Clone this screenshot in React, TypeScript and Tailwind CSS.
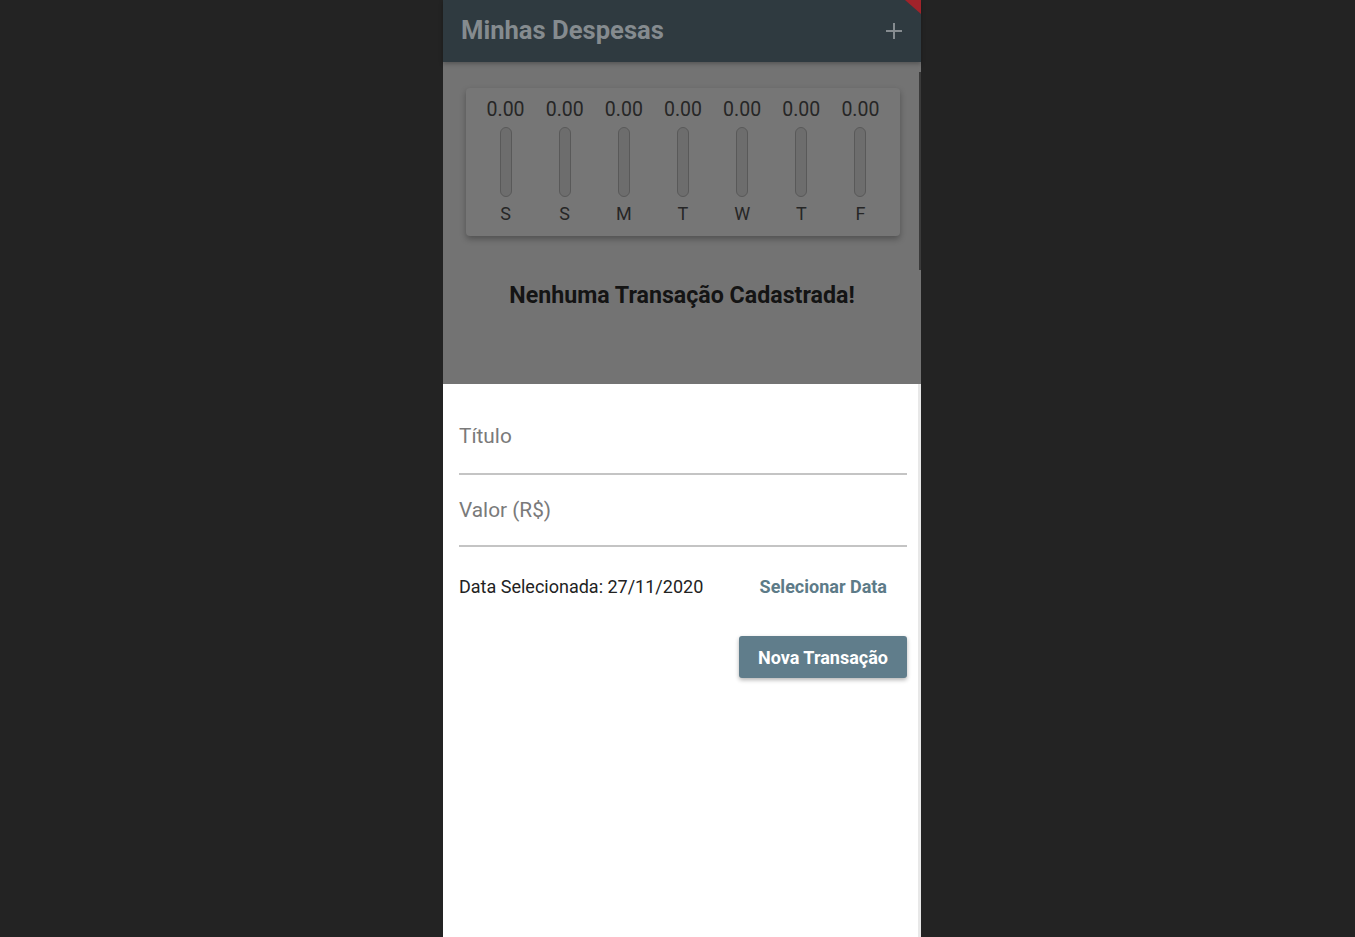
import React from "react";

const days = ["S", "S", "M", "T", "W", "T", "F"];

export default function App() {
  return (
    <div
      className="w-full h-[937px] bg-[#232323] flex justify-start pl-[443px] overflow-hidden"
      style={{ fontFamily: "Roboto, 'Liberation Sans', sans-serif" }}
    >
      <div className="w-[478px] h-full flex flex-col relative">
        {/* Header */}
        <div className="h-[62px] bg-[#2f3a40] flex items-center justify-between pl-[18px] pr-[16px] shadow-[0_2px_4px_rgba(0,0,0,0.25)] z-10">
          <span className="text-[25.6px] font-bold text-[#858b8f] mt-[-2px]">
            Minhas Despesas
          </span>
          <svg width="20" height="20" viewBox="0 0 20 20" className="mr-[1px]">
            <path d="M10 2v16M2 10h16" stroke="#868c90" strokeWidth="2" />
          </svg>
        </div>
        <svg width="20" height="14" viewBox="0 0 20 14" className="absolute right-0 top-0 z-20">
          <polygon points="4,0 20,0 20,14" fill="#a0232a" />
        </svg>

        {/* Dimmed content */}
        <div className="h-[322px] bg-[#737373] flex flex-col relative">
          <div className="absolute right-0 top-[10px] w-[2px] h-[198px] bg-[#3a3a3a]" />
          <div className="mt-[26px] ml-[23px] mr-[21px] h-[148px] bg-[#767676] rounded-[4px] shadow-[0_3px_6px_rgba(0,0,0,0.3)] px-[10px] pt-[11px] flex">
            {days.map((d, i) => (
              <div key={i} className="flex-1 flex flex-col items-center">
                <span className="block text-[19.5px] leading-[22px] text-[#262626]">0.00</span>
                <div className="mt-[6px] w-[12px] h-[70px] rounded-full bg-[#6d6d6d] border border-[#595959]" />
                <span className="block mt-[7px] text-[18px] leading-[20px] text-[#262626]">{d}</span>
              </div>
            ))}
          </div>
          <div className="mt-[46px] text-center text-[23.2px] leading-[26px] font-bold text-[#141414]">
            Nenhuma Transação Cadastrada!
          </div>
        </div>

        {/* Bottom sheet */}
        <div className="flex-1 bg-white pl-[16px] pr-[11px] pt-[40px] border-r-[3px] border-[#e8e8e8]">
          <div className="border-b-[2px] border-[#c4c4c4] pb-[25px]">
            <div className="text-[20.8px] leading-[24px] text-[#7a7a7a]">Título</div>
          </div>
          <div className="border-b-[2px] border-[#c4c4c4] pt-[23px] pb-[23px]">
            <div className="text-[20.8px] leading-[24px] text-[#7a7a7a]">Valor (R$)</div>
          </div>
          <div className="mt-[29px] h-[22px] flex items-center justify-between">
            <div className="text-[18px] leading-[22px] text-[#222222]">
              Data Selecionada: 27/11/2020
            </div>
            <div className="text-[18px] leading-[22px] font-bold text-[#5d7b88] pr-[20px]">
              Selecionar Data
            </div>
          </div>
          <div className="mt-[38px] flex justify-end">
            <button className="w-[168px] h-[42px] bg-[#607d8b] text-white text-[18px] font-bold rounded-[3px] shadow-[0_2px_4px_rgba(0,0,0,0.3)]">
              Nova Transação
            </button>
          </div>
        </div>
      </div>
    </div>
  );
}
